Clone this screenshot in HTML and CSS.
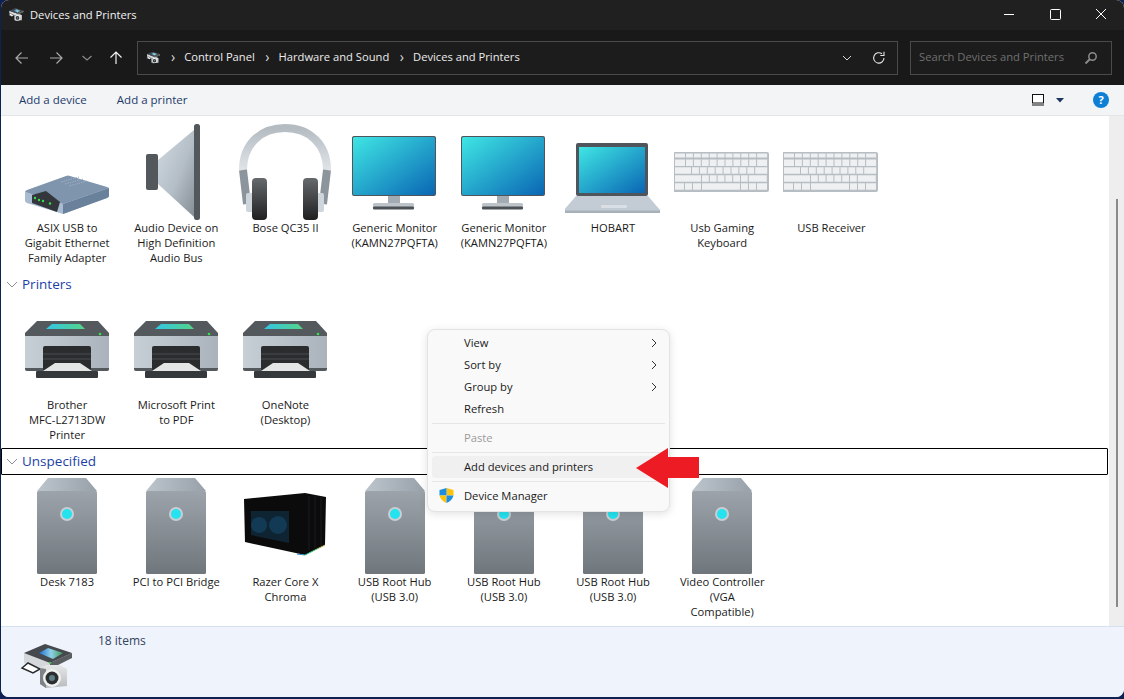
FILE: index.html
```html
<!DOCTYPE html>
<html lang="en">
<head>
<meta charset="utf-8">
<title>Devices and Printers</title>
<link rel="stylesheet" href="styles.css">
</head>
<body>
<svg class="defs" aria-hidden="true">
  <defs>
    <linearGradient id="screen" x1="0" y1="0" x2="1" y2="1"><stop offset="0" stop-color="#3fe6e4"/><stop offset="1" stop-color="#0a66b4"/></linearGradient>
    <linearGradient id="cone" x1="0" y1="0" x2="1" y2="1"><stop offset="0" stop-color="#d2dbe2"/><stop offset=".55" stop-color="#b4bec6"/><stop offset="1" stop-color="#868e95"/></linearGradient>
    <linearGradient id="cup" x1="0" y1="0" x2="0" y2="1"><stop offset="0" stop-color="#666a6d"/><stop offset="1" stop-color="#1f1f20"/></linearGradient>
    <linearGradient id="band" x1="0" y1="0" x2="0" y2="1"><stop offset="0" stop-color="#b4bcc2"/><stop offset="1" stop-color="#dfe4e8"/></linearGradient>
    <linearGradient id="tower" x1="0" y1="0" x2="0" y2="1"><stop offset="0" stop-color="#9ca3aa"/><stop offset="1" stop-color="#6f767c"/></linearGradient>
    <linearGradient id="towertop" x1="0" y1="0" x2="1" y2="0"><stop offset="0" stop-color="#bcc5cc"/><stop offset="1" stop-color="#98a1a9"/></linearGradient>
    <linearGradient id="body" x1="0" y1="0" x2="1" y2="0"><stop offset="0" stop-color="#c7cfd6"/><stop offset="1" stop-color="#aab3bb"/></linearGradient>
    <linearGradient id="win" x1="0" y1="0" x2="1" y2="0"><stop offset="0" stop-color="#33c5e6"/><stop offset="1" stop-color="#54d486"/></linearGradient>
    <linearGradient id="rgb" x1="0" y1="0" x2="1" y2="0"><stop offset="0" stop-color="#2b6cd6"/><stop offset=".5" stop-color="#2bd690"/><stop offset="1" stop-color="#d6a32b"/></linearGradient>
    <linearGradient id="photo" x1="0" y1="0" x2="1" y2="0"><stop offset="0" stop-color="#1f6fd0"/><stop offset=".5" stop-color="#8fd0e8"/><stop offset="1" stop-color="#3f9a55"/></linearGradient>
    <linearGradient id="cam" x1="0" y1="0" x2="0" y2="1"><stop offset="0" stop-color="#e6e7e8"/><stop offset="1" stop-color="#b9bbbd"/></linearGradient>

    <symbol id="i-router" viewBox="0 0 96 96">
      <path d="M6 68 6 77Q6 78 8 79L44 90 88 74Q90 73 90 72V64L44 80Z" fill="#a9bbd0"/>
      <path d="M6 68Q6 67 8 66L47 52Q49 51 51 52L88 63Q90 64 90 64L44 80Z" fill="#7f94ad"/>
      <path d="M44 80 90 64V72Q90 73 88 74L44 90Z" fill="#6a819c"/>
      <path d="M13 71 27 67 41 78 38 88 13 79Z" fill="#33363a"/>
      <path d="M42 58 60 53M46 60 64 55M50 62 68 57" stroke="#9fb0c3" stroke-width="1" stroke-dasharray="1.500 1"/>
      <g fill="#35e04a"><circle cx="16" cy="74" r="1.200"/><circle cx="20" cy="76" r="1.200"/><circle cx="24" cy="77" r="1.200"/><circle cx="31" cy="79.500" r="1.200"/></g>
    </symbol>

    <symbol id="i-speaker" viewBox="0 0 96 96">
      <path d="M30 36 66 6V93L30 60Z" fill="url(#cone)"/>
      <rect x="18" y="30" width="12" height="36" rx="2" fill="#53585d"/>
      <rect x="66" y="0" width="6" height="96" rx="2.500" fill="#53585d"/>
    </symbol>

    <symbol id="i-phones" viewBox="0 0 96 96">
      <path d="M6 46C6 20 24 4 48 4S90 20 90 46" fill="none" stroke="url(#band)" stroke-width="8"/>
      <path d="M6 46 10 80M90 46 86 80" stroke="#8d959c" stroke-width="8" fill="none"/>
      <rect x="9" y="69" width="8" height="19" rx="2" fill="#ced6dc"/>
      <rect x="79" y="69" width="8" height="19" rx="2" fill="#ced6dc"/>
      <rect x="15" y="54" width="15" height="42" rx="4" fill="url(#cup)"/>
      <rect x="66" y="54" width="15" height="42" rx="4" fill="url(#cup)"/>
    </symbol>

    <symbol id="i-monitor" viewBox="0 0 96 96">
      <rect x="41" y="72" width="12" height="8" fill="#a3abb2"/>
      <rect x="26" y="79" width="41" height="4" rx="1.500" fill="#bcc4ca"/>
      <rect x="26" y="82.500" width="41" height="3" rx="1" fill="#4c5156"/>
      <rect x="5" y="12" width="84" height="60" rx="2" fill="#4f555b"/>
      <rect x="6" y="13" width="82" height="58" rx="1.500" fill="url(#screen)"/>
    </symbol>

    <symbol id="i-laptop" viewBox="0 0 96 96">
      <path d="M11 72 83 72 95 86V89H-1V86Z" fill="#c3ccd4"/>
      <rect x="-1" y="86.500" width="96" height="2.500" fill="#a8b1b8"/>
      <rect x="36" y="81" width="26" height="3" rx="1" fill="#d9dfe4"/>
      <rect x="11" y="19" width="72" height="53" rx="2" fill="#4f555b"/>
      <rect x="14" y="23" width="66" height="46" fill="url(#screen)"/>
    </symbol>

    <symbol id="i-keyboard" viewBox="0 0 96 96">
      <rect x="-1" y="28" width="96" height="40" rx="2" fill="#b6bdc3"/>
      <g fill="none" stroke="#eef0f2">
        <path d="M1 31.500H94" stroke-width="4" stroke-dasharray="10 1 6.900 1 6.900 1 6.900 1 6.900 1 6.900 1 6.900 1 6.900 1 6.900 1 6.900 1 10 9"/>
        <path d="M1 38.800H94" stroke-width="6.500" stroke-dasharray="10 1 6.900 1 6.900 1 6.900 1 6.900 1 6.900 1 6.900 1 6.900 1 6.900 1 6.900 1 10 9"/>
        <path d="M1 46.500H94" stroke-width="6.500" stroke-dasharray="16 1 6.900 1 6.900 1 6.900 1 6.900 1 6.900 1 6.900 1 6.900 1 6.900 1 12 9"/>
        <path d="M1 54.500H94" stroke-width="6.500" stroke-dasharray="26 1 6.800 1 6.800 1 6.800 1 6.800 1 6.800 1 6.800 1 18 9"/>
        <path d="M1 62.500H94" stroke-width="6.500" stroke-dasharray="9 1 7 1 8 1 38 1 7 1 7 1 10 9"/>
      </g>
    </symbol>

    <symbol id="i-printer" viewBox="0 0 96 96">
      <path d="M18 20H79L90 32V36H6V32Z" fill="#54595e"/>
      <path d="M33 23H61L66 28H27Z" fill="url(#win)"/>
      <path d="M6 35H90V68Q90 70 88 70H8Q6 70 6 68Z" fill="url(#body)"/>
      <path d="M6 67H90V68Q90 70 88 70H8Q6 70 6 68Z" fill="#54595e"/>
      <rect x="24" y="45" width="48" height="25" rx="2" fill="#2a2c2e"/>
      <path d="M24 53H72M24 58H72" stroke="#3a3c3f" stroke-width="2"/>
      <path d="M36 62H61L73 70H24Z" fill="#e4e5e5"/>
      <rect x="17" y="70" width="62" height="7" rx="1" fill="#36393c"/>
      <circle cx="81" cy="33" r="1.300" fill="#35e04a"/>
    </symbol>

    <symbol id="i-tower" viewBox="0 0 96 96">
      <path d="M29 0H67L78 13H18Z" fill="url(#towertop)"/>
      <rect x="18" y="13" width="60" height="83" rx="1.500" fill="url(#tower)"/>
      <circle cx="48" cy="36" r="7" fill="#c8ced3"/>
      <circle cx="48" cy="36" r="5" fill="#24e3ee"/>
    </symbol>

    <symbol id="i-razer" viewBox="0 0 96 96">
      <path d="M7 21 68 15 89 19 88 67 68 77 8 64Z" fill="#0b0b0c"/>
      <path d="M14 33H52V65L14 57Z" fill="#0e2433"/>
      <circle cx="22" cy="47" r="8" fill="#123a55"/>
      <circle cx="41" cy="47" r="9" fill="#123a55"/>
      <path d="M60 76 68 77 88 67" fill="none" stroke="url(#rgb)" stroke-width="1"/>
      <path d="M72 18V72M78 18V70M84 18V68" stroke="#1c1c1e" stroke-width="1"/>
    </symbol>

    <symbol id="i-combo" viewBox="0 0 64 48">
      <path d="M4 9V19L22 26 52 14V9L30 19Z" fill="#d5d8da"/>
      <path d="M30 19 52 9V14L30 25Z" fill="#5a5d60"/>
      <path d="M4 9 25 0 52 9 30 19Z" fill="#45484c"/>
      <path d="M19 9 28 4 43 9 33 15Z" fill="url(#photo)"/>
      <path d="M2 24 8 19 20 25 13 29Z" fill="#fff" stroke="#2a2c2e" stroke-width="1.500"/>
      <circle cx="30" cy="19" r="1" fill="#35e04a"/>
      <path d="M20 24 26 21H40L47 25V42L26 44 20 40Z" fill="url(#cam)"/>
      <path d="M20 24 26 25V44L20 40Z" fill="#7f8386"/>
      <circle cx="32" cy="34" r="9" fill="#f0f1f1"/>
      <circle cx="32" cy="34" r="6.500" fill="#2c2e30"/>
      <circle cx="32" cy="34" r="3" fill="#5f7f88"/>
    </symbol>
  </defs>
</svg>

<div class="window">
  <header class="titlebar">
    <svg class="titleicon"><use href="#i-combo"/></svg>
    <span class="titletext">Devices and Printers</span>
    <div class="winctrls">
      <svg class="winctrl" viewBox="0 0 46 30"><path d="M18 14.500H28" stroke="#fff"/></svg>
      <svg class="winctrl" viewBox="0 0 46 30"><rect x="18.500" y="9.500" width="10" height="10" rx="1" fill="none" stroke="#fff"/></svg>
      <svg class="winctrl" viewBox="0 0 46 30"><path d="M18 9 28 19M28 9 18 19" stroke="#fff"/></svg>
    </div>
  </header>

  <nav class="navbar">
    <svg class="navicon back" viewBox="0 0 14 14"><path d="M13 7H1M6.500 1.500 1 7l5.500 5.500" fill="none" stroke="#a9a9a9" stroke-width="1.200"/></svg>
    <svg class="navicon forward" viewBox="0 0 14 14"><path d="M1 7H13M7.500 1.500 13 7l-5.500 5.500" fill="none" stroke="#a9a9a9" stroke-width="1.200"/></svg>
    <svg class="navicon recent" viewBox="0 0 14 14"><path d="M2.500 5 7 9l4.500-4" fill="none" stroke="#8a8a8a" stroke-width="1.200"/></svg>
    <svg class="navicon up" viewBox="0 0 14 14"><path d="M7 13V1M1.500 6.500 7 1l5.500 5.500" fill="none" stroke="#f0f0f0" stroke-width="1.200"/></svg>
    <div class="address">
      <svg class="addricon"><use href="#i-combo"/></svg>
      <span class="crumbsep">›</span><span class="crumb">Control Panel</span>
      <span class="crumbsep">›</span><span class="crumb">Hardware and Sound</span>
      <span class="crumbsep">›</span><span class="crumb">Devices and Printers</span>
      <svg class="addrdrop" viewBox="0 0 10 6"><path d="M1 1 5 5 9 1" fill="none" stroke="#d8d8d8"/></svg>
      <svg class="addrrefresh" viewBox="0 0 14 14"><path d="M12 7A5.200 5.200 0 1 1 10 2.800" fill="none" stroke="#e6e6e6" stroke-width="1.100"/><path d="M12 .8V4.500H8.300" fill="none" stroke="#e6e6e6" stroke-width="1.100"/></svg>
    </div>
    <div class="search">
      <span class="searchtext">Search Devices and Printers</span>
      <svg class="searchicon" viewBox="0 0 14 14"><circle cx="8.500" cy="5.500" r="3.700" fill="none" stroke="#8b8b8b" stroke-width="1.500"/><path d="M6 8 1.500 12.500" stroke="#8b8b8b" stroke-width="2"/></svg>
    </div>
  </nav>

  <div class="cmdbar">
    <span class="cmd">Add a device</span>
    <span class="cmd">Add a printer</span>
    <svg class="viewicon" viewBox="0 0 13 12"><rect x=".5" y=".5" width="11" height="8.500" fill="#fff" stroke="#111"/><path d="M0 11H12" stroke="#111"/></svg>
    <svg class="viewdrop" viewBox="0 0 8 5"><path d="M0 0H8L4 4.500Z" fill="#1e3560"/></svg>
    <span class="help">?</span>
  </div>

  <div class="middle">
    <main class="content">
      <section class="row">
        <div class="item"><svg class="icon"><use href="#i-router"/></svg><span class="label">ASIX USB to<br>Gigabit Ethernet<br>Family Adapter</span></div>
        <div class="item"><svg class="icon"><use href="#i-speaker"/></svg><span class="label">Audio Device on<br>High Definition<br>Audio Bus</span></div>
        <div class="item"><svg class="icon"><use href="#i-phones"/></svg><span class="label">Bose QC35 II</span></div>
        <div class="item"><svg class="icon"><use href="#i-monitor"/></svg><span class="label">Generic Monitor<br>(KAMN27PQFTA)</span></div>
        <div class="item"><svg class="icon"><use href="#i-monitor"/></svg><span class="label">Generic Monitor<br>(KAMN27PQFTA)</span></div>
        <div class="item"><svg class="icon"><use href="#i-laptop"/></svg><span class="label">HOBART</span></div>
        <div class="item"><svg class="icon"><use href="#i-keyboard"/></svg><span class="label">Usb Gaming<br>Keyboard</span></div>
        <div class="item"><svg class="icon"><use href="#i-keyboard"/></svg><span class="label">USB Receiver</span></div>
      </section>

      <h2 class="group">
        <svg class="groupchev" viewBox="0 0 12 7"><path d="M1 1 6 6 11 1" fill="none" stroke="#8a9099"/></svg><span class="grouptext">Printers</span>
      </h2>
      <section class="row">
        <div class="item"><svg class="icon"><use href="#i-printer"/></svg><span class="label">Brother<br>MFC-L2713DW<br>Printer</span></div>
        <div class="item"><svg class="icon"><use href="#i-printer"/></svg><span class="label">Microsoft Print<br>to PDF</span></div>
        <div class="item"><svg class="icon"><use href="#i-printer"/></svg><span class="label">OneNote<br>(Desktop)</span></div>
      </section>

      <h2 class="group focused">
        <svg class="groupchev" viewBox="0 0 12 7"><path d="M1 1 6 6 11 1" fill="none" stroke="#8a9099"/></svg><span class="grouptext">Unspecified</span>
      </h2>
      <section class="row">
        <div class="item"><svg class="icon"><use href="#i-tower"/></svg><span class="label">Desk 7183</span></div>
        <div class="item"><svg class="icon"><use href="#i-tower"/></svg><span class="label">PCI to PCI Bridge</span></div>
        <div class="item"><svg class="icon"><use href="#i-razer"/></svg><span class="label">Razer Core X<br>Chroma</span></div>
        <div class="item"><svg class="icon"><use href="#i-tower"/></svg><span class="label">USB Root Hub<br>(USB 3.0)</span></div>
        <div class="item"><svg class="icon"><use href="#i-tower"/></svg><span class="label">USB Root Hub<br>(USB 3.0)</span></div>
        <div class="item"><svg class="icon"><use href="#i-tower"/></svg><span class="label">USB Root Hub<br>(USB 3.0)</span></div>
        <div class="item"><svg class="icon"><use href="#i-tower"/></svg><span class="label">Video Controller<br>(VGA<br>Compatible)</span></div>
      </section>
    </main>
    <div class="scrollbar"><div class="thumb"></div></div>
  </div>

  <footer class="details">
    <svg class="detailicon"><use href="#i-combo"/></svg>
    <span class="count">18 items</span>
  </footer>
</div>

<div class="menu">
  <div class="menuitem"><span class="menutext">View</span><svg class="submenu" viewBox="0 0 6 10"><path d="M1 1 5 5 1 9" fill="none" stroke="#333"/></svg></div>
  <div class="menuitem"><span class="menutext">Sort by</span><svg class="submenu" viewBox="0 0 6 10"><path d="M1 1 5 5 1 9" fill="none" stroke="#333"/></svg></div>
  <div class="menuitem"><span class="menutext">Group by</span><svg class="submenu" viewBox="0 0 6 10"><path d="M1 1 5 5 1 9" fill="none" stroke="#333"/></svg></div>
  <div class="menuitem"><span class="menutext">Refresh</span></div>
  <div class="menusep"></div>
  <div class="menuitem disabled"><span class="menutext">Paste</span></div>
  <div class="menusep"></div>
  <div class="menuitem active"><span class="menutext">Add devices and printers</span></div>
  <div class="menusep"></div>
  <div class="menuitem">
    <svg class="shield" viewBox="0 0 15 15"><path d="M7.500 0 14.500 2V7.500H7.500Z" fill="#ffc20e"/><path d="M7.500 0 .5 2V7.500H7.500Z" fill="#1c8fe0"/><path d="M.5 7.500H7.500V15Q2 13 .5 7.500Z" fill="#ffc20e"/><path d="M14.500 7.500H7.500V15Q13 13 14.500 7.500Z" fill="#1c8fe0"/></svg>
    <span class="menutext">Device Manager</span>
  </div>
</div>

<svg class="redarrow" viewBox="0 0 63 40"><path d="M0 20 32 0V9H63V30H32V40Z" fill="#ed1c24"/></svg>
</body>
</html>
```

FILE: styles.css
```css
* { box-sizing: border-box; }

html, body {
  margin: 0;
  height: 100%;
  overflow: hidden;
}

body {
  background: #0d2253;
  font-family: "Open Sans", "Liberation Sans", sans-serif;
  font-size: 11.2px;
  color: #1a1a1a;
}

.defs { position: absolute; width: 0; height: 0; }

.window {
  height: 697px;
  margin-left: 1px;
  display: flex;
  flex-direction: column;
  border-radius: 8px;
  overflow: hidden;
  background: #fff;
}

.titlebar {
  height: 30px;
  flex: none;
  display: flex;
  align-items: center;
  background: #202020;
  color: #f2f2f2;
  padding-left: 7px;
}

.titleicon { width: 19px; height: 14px; margin-right: 3px; }
.titletext { flex: 1; padding-bottom: 2px; }

.winctrls { display: flex; }
.winctrl { width: 46px; height: 30px; }

.navbar {
  height: 55px;
  flex: none;
  display: flex;
  align-items: center;
  background: #191919;
  padding: 0 11px 0 0;
}

.navicon { width: 14px; height: 14px; flex: none; }
.back { margin-left: 14px; }
.forward { margin-left: 20px; }
.recent { margin-left: 17px; }
.up { margin-left: 15px; }

.address {
  margin-left: 14px;
  width: 761px;
  height: 34px;
  flex: none;
  display: flex;
  align-items: center;
  border: 1px solid #4a4a4a;
  background: #1c1c1c;
  color: #ececec;
  padding-left: 8px;
}

.addricon { width: 17px; height: 14px; }
.crumbsep { margin: 0 9px 0 8px; font-size: 14px; line-height: 14px; color: #dcdcdc; padding-bottom: 2px; }
.crumb { margin-right: 2.5px; padding-bottom: 2px; }
.addrdrop { width: 10px; height: 6px; margin-left: auto; }
.addrrefresh { width: 14px; height: 14px; margin: 0 11px 0 20px; }

.search {
  margin-left: 12px;
  width: 202px;
  height: 34px;
  flex: none;
  display: flex;
  align-items: center;
  justify-content: space-between;
  border: 1px solid #4a4a4a;
  background: #1c1c1c;
  color: #707070;
  padding: 0 13px 0 8px;
}

.searchtext { padding-bottom: 2px; }
.searchicon { width: 14px; height: 14px; }

.cmdbar {
  height: 31px;
  flex: none;
  display: flex;
  align-items: center;
  background: #f3f4f6;
  border-bottom: 1px solid #e4e5e8;
  padding-left: 18px;
  color: #1d3a6a;
}

.cmd { margin-right: 30px; font-size: 11.5px; padding-bottom: 2px; }
.viewicon { width: 13px; height: 12px; margin-left: auto; }
.viewdrop { width: 8px; height: 5px; margin-left: 11px; }

.help {
  width: 16px;
  height: 16px;
  margin: 0 15px 0 29px;
  border-radius: 50%;
  background: #0f7fd6;
  color: #fff;
  font-weight: 700;
  font-size: 11px;
  line-height: 16px;
  text-align: center;
}

.middle {
  flex: 1;
  display: flex;
  min-height: 0;
}

.content {
  flex: 1;
  background: #fff;
  padding: 8px 0 0 0;
}

.row {
  display: flex;
  padding-left: 11.5px;
  min-height: 141px;
}

.item {
  width: 109.2px;
  flex: none;
  display: flex;
  flex-direction: column;
  align-items: center;
  text-align: center;
}

.icon { width: 96px; height: 96px; flex: none; overflow: visible; }

.label {
  line-height: 15px;
  white-space: nowrap;
}

.group {
  margin: 7px 0 5px;
  height: 24px;
  display: flex;
  align-items: center;
  padding-left: 6px;
  font-size: 13.5px;
  font-weight: 400;
  color: #1d3fa6;
}

.group.focused {
  margin: 6px 1px 3px 0;
  height: 27px;
  padding-left: 5px;
  border: 1px solid #000;
  border-radius: 1px;
}

.groupchev { width: 12px; height: 7px; margin-right: 4px; margin-left: -1px; }
.grouptext { padding-bottom: 1px; }

.scrollbar {
  width: 15px;
  flex: none;
  background: #eeeeee;
  padding-top: 83px;
  display: flex;
  justify-content: center;
}

.thumb {
  width: 2px;
  height: 408px;
  background: #8a8a8a;
}

.details {
  height: 71px;
  flex: none;
  display: flex;
  align-items: flex-start;
  background: #eff3fb;
  border-top: 1px solid #d6e0ee;
  padding-left: 19px;
  color: #33445f;
}

.detailicon { width: 64px; height: 48px; margin-top: 17px; }
.count { margin: 5px 0 0 14px; font-size: 12px; }

.menu {
  position: absolute;
  left: 427px;
  top: 329px;
  width: 243px;
  padding: 2px 4px 4px;
  background: #f9f9f9;
  border: 1px solid #e3e3e3;
  border-radius: 8px;
  box-shadow: 0 2px 8px rgba(0, 0, 0, .12);
}

.menuitem {
  height: 22px;
  padding-left: 32px;
  display: flex;
  align-items: center;
  position: relative;
  border-radius: 4px;
}

.menutext { padding-bottom: 1px; }
.menuitem.disabled { color: #9b9b9b; }
.menuitem.active { background: #f0f0f0; }

.menusep {
  height: 1px;
  margin: 3px 0;
  background: #e6e6e6;
}

.submenu {
  width: 6px;
  height: 10px;
  position: absolute;
  right: 8px;
  top: 6px;
}

.shield {
  width: 15px;
  height: 15px;
  position: absolute;
  left: 7px;
  top: 3px;
}

.redarrow {
  position: absolute;
  left: 636px;
  top: 448px;
  width: 63px;
  height: 40px;
}
```
